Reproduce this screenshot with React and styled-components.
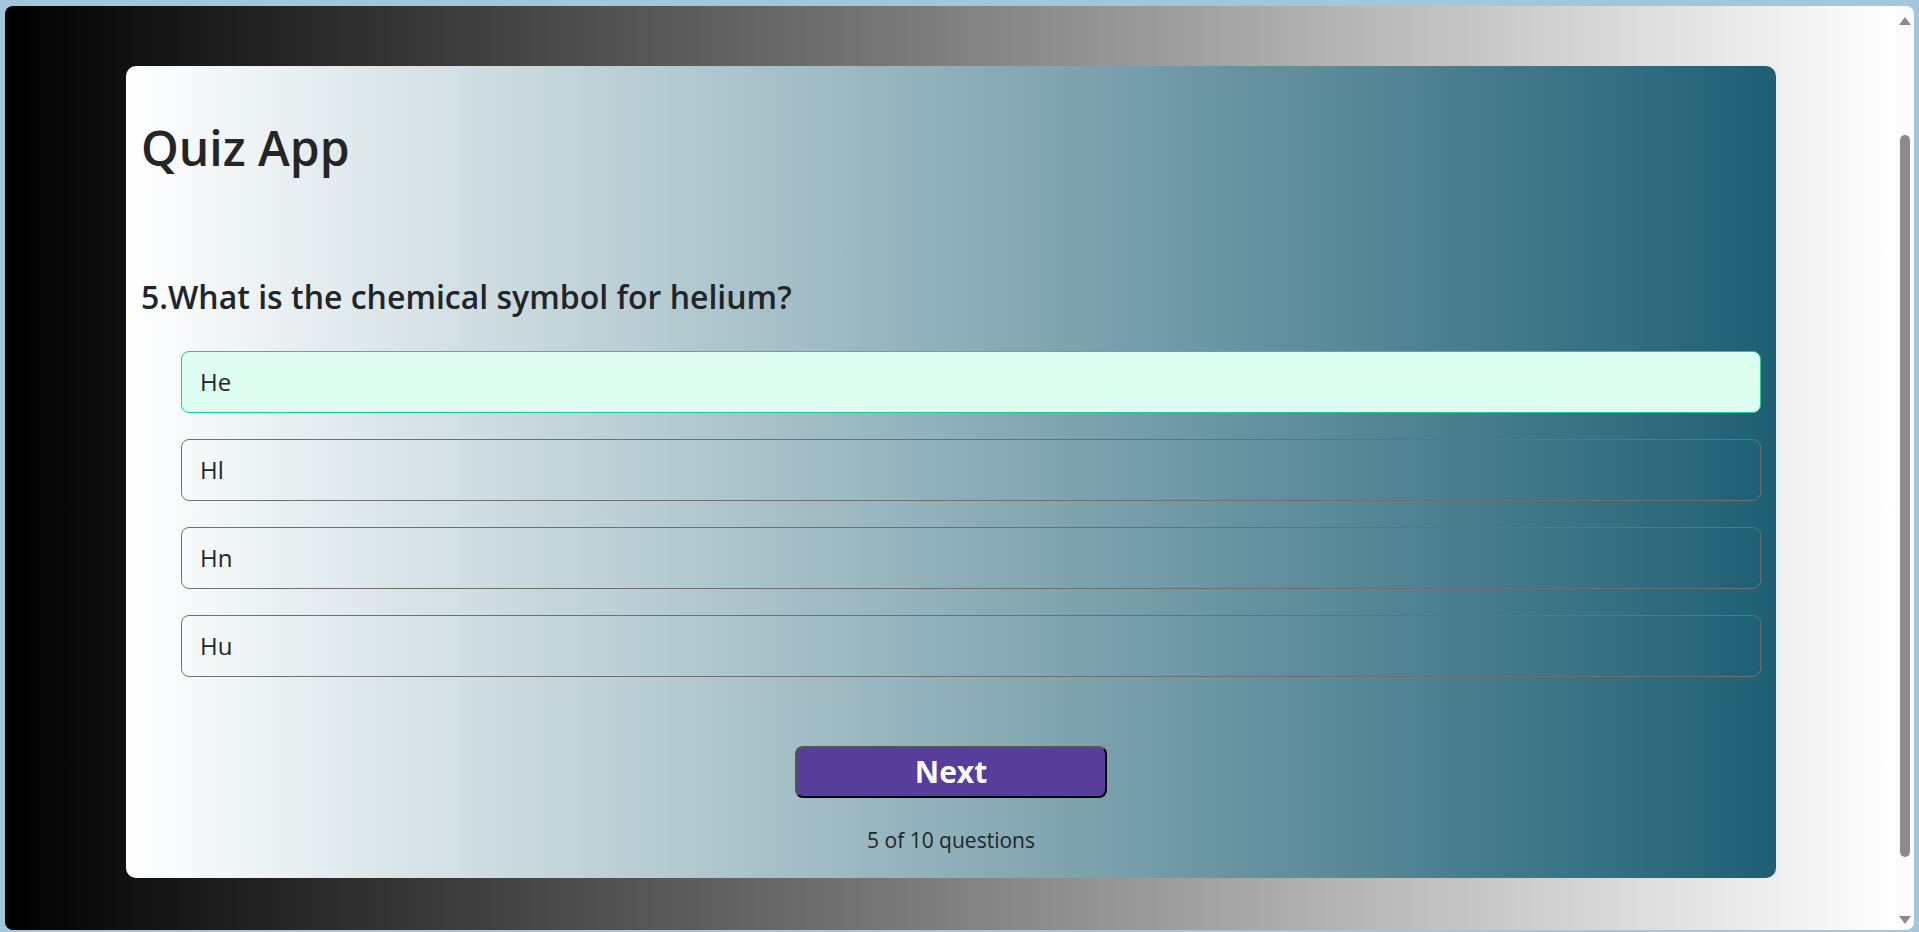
import React from "react";
import styled, { createGlobalStyle } from "styled-components";

const GlobalStyle = createGlobalStyle`
  html, body {
    margin: 0;
    height: 100%;
    overflow: hidden;
  }
  body {
    background: #a4c6dc;
    font-family: "Open Sans", "Noto Sans", sans-serif;
    color: #212529;
  }
  #root {
    height: 100%;
  }
`;

const Frame = styled.div`
  height: 100%;
  box-sizing: border-box;
  padding: 6px 5px 2px 5px;
  display: flex;
`;

const Window = styled.div`
  flex: 1;
  min-height: 0;
  display: flex;
  border-radius: 8px;
  overflow: hidden;
`;

const Viewport = styled.main`
  flex: 1;
  min-width: 0;
  overflow: hidden;
  background: linear-gradient(to right, #000000, #ffffff);
  padding: 60px 120px 0 121px;
`;

const Scrollbar = styled.div`
  flex: none;
  width: 18px;
  box-sizing: border-box;
  padding: 11px 0 6px;
  background: #fcfcfc;
  display: flex;
  flex-direction: column;
  align-items: center;
`;

const Arrow = styled.span`
  width: 0;
  height: 0;
  border-left: 6px solid transparent;
  border-right: 6px solid transparent;
  ${(p) =>
    p.$down
      ? "border-top: 8px solid #8b8b8b;"
      : "border-bottom: 8px solid #8b8b8b;"}
`;

const Thumb = styled.div`
  width: 10px;
  height: 722px;
  margin-top: 110px;
  border-radius: 5px;
  background: #8b8b8b;
`;

const Spacer = styled.div`
  flex: 1;
`;

const Card = styled.section`
  background: linear-gradient(to right, #ffffff, #1e5f74);
  border-radius: 10px;
  padding: 53px 15px 22px;
`;

const Title = styled.h1`
  margin: 0;
  font-size: 48px;
  font-weight: 600;
  line-height: 1.2;
  color: #232527;
`;

const Question = styled.h2`
  margin: 101px 0 0;
  font-size: 32px;
  font-weight: 600;
  line-height: 1.2;
`;

const OptionList = styled.ul`
  list-style: none;
  margin: 35px 0 0;
  padding: 0 0 0 40px;
  display: flex;
  flex-direction: column;
  gap: 26px;
`;

const Option = styled.li`
  box-sizing: border-box;
  height: 62px;
  padding: 0 18px;
  display: flex;
  align-items: center;
  border: 1px solid ${(p) => (p.$correct ? "#20c997" : "#6f6f6f")};
  background: ${(p) => (p.$correct ? "#dcfdef" : "transparent")};
  border-radius: 8px;
  font-size: 24px;
  cursor: pointer;
`;

const Footer = styled.div`
  margin-top: 69px;
  display: flex;
  flex-direction: column;
  align-items: center;
`;

const NextButton = styled.button`
  width: 312px;
  height: 52px;
  box-sizing: border-box;
  border: 2px solid;
  border-color: #555555 #000000 #000000 #555555;
  border-radius: 8px;
  background: #573e9b;
  color: #ffffff;
  font-family: inherit;
  font-size: 30px;
  font-weight: 700;
  line-height: 48px;
  padding: 0;
  cursor: pointer;
`;

const Progress = styled.p`
  margin: 27px 0 0;
  font-size: 21px;
  line-height: 1.5;
`;

const options = [
  { label: "He", correct: true },
  { label: "Hl" },
  { label: "Hn" },
  { label: "Hu" },
];

export default function App() {
  return (
    <>
      <GlobalStyle />
      <Frame>
        <Window>
          <Viewport>
            <Card>
              <Title>Quiz App</Title>
              <Question>5.What is the chemical symbol for helium?</Question>
              <OptionList>
                {options.map((o) => (
                  <Option key={o.label} $correct={o.correct}>
                    {o.label}
                  </Option>
                ))}
              </OptionList>
              <Footer>
                <NextButton type="button">Next</NextButton>
                <Progress>5 of 10 questions</Progress>
              </Footer>
            </Card>
          </Viewport>
          <Scrollbar>
            <Arrow />
            <Thumb />
            <Spacer />
            <Arrow $down />
          </Scrollbar>
        </Window>
      </Frame>
    </>
  );
}
